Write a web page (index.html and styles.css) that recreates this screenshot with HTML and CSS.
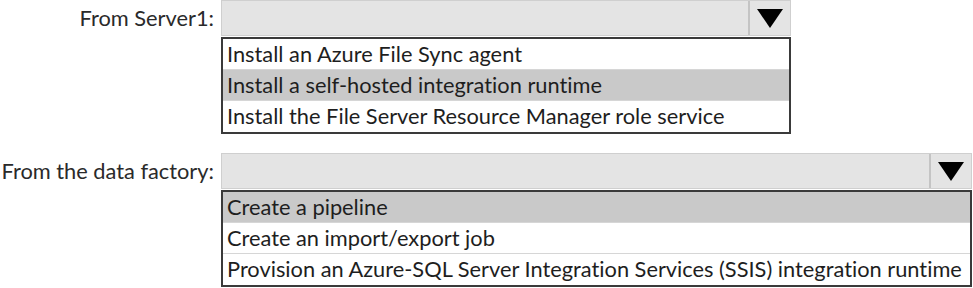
FILE: index.html
```html
<!DOCTYPE html>
<html lang='en'>
<head>
    <meta charset='UTF-8'>
    <title>Answer Area</title>
    <link rel="stylesheet" href="styles.css">
</head>
<body>
    <div class='row'>
        <div class='label'>From Server1:</div>
        <div class='field narrow'>
            <div class='select'>
                <div class='value'></div>
                <div class='arrow'><svg width='26' height='19' viewBox='0 0 26 19'><path d='M0 0 H26 L13 19 Z' fill='#000'/></svg></div>
            </div>
            <div class='list'>
                <div class='option'>Install an Azure File Sync agent</div>
                <div class='option picked'>Install a self-hosted integration runtime</div>
                <div class='option'>Install the File Server Resource Manager role service</div>
            </div>
        </div>
    </div>

    <div class='row second'>
        <div class='label'>From the data factory:</div>
        <div class='field wide'>
            <div class='select'>
                <div class='value'></div>
                <div class='arrow'><svg width='26' height='19' viewBox='0 0 26 19'><path d='M0 0 H26 L13 19 Z' fill='#000'/></svg></div>
            </div>
            <div class='list'>
                <div class='option picked'>Create a pipeline</div>
                <div class='option'>Create an import/export job</div>
                <div class='option'>Provision an Azure-SQL Server Integration Services (SSIS) integration runtime</div>
            </div>
        </div>
    </div>
</body>
</html>
```

FILE: styles.css
```css
body { font-family: 'Lato', 'Open Sans', sans-serif; margin: 0; padding: 0; background: #fff; color: #1e1e1e; font-size: 21.8px; font-variant-ligatures: none; }
.row { display: flex; align-items: flex-start; }
.second { margin-top: 19px; }
.label { width: 214px; text-align: right; line-height: 36px; padding-right: 7px; color: #2a2a2a; white-space: nowrap; }
.field.narrow { width: 570px; }
.field.wide { width: 751px; }
.select { display: flex; height: 36px; background: #e4e4e4; border: 1px solid #cfcfcf; box-sizing: border-box; }
.select .value { flex: 1; }
.select .arrow { width: 40px; border-left: 2px solid #c4c4c4; display: flex; align-items: center; justify-content: center; }
.list { margin-top: 1px; border: 2px solid #3a3a3a; background: #fff; }
.option { height: 31px; line-height: 30px; padding-left: 4px; border-bottom: 1px solid #d6d6d6; box-sizing: border-box; white-space: nowrap; }
.option:last-child { border-bottom: none; }
.picked { background: #c9c9c9; }
```
